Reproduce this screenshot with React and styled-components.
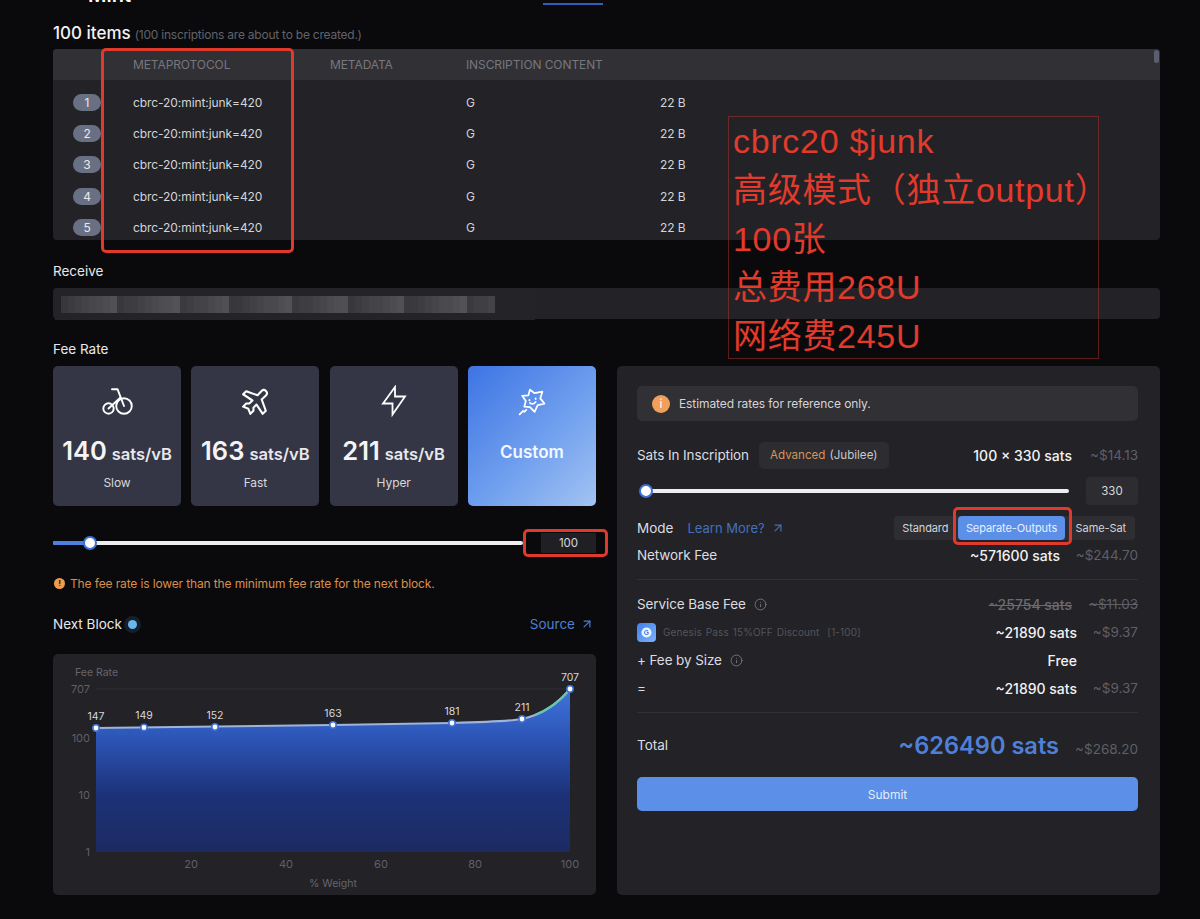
import React from "react";
import styled, { createGlobalStyle } from "styled-components";
import { ArrowLeft, ArrowUpRight, Info } from "lucide-react";
import { PiAirplaneTilt } from "react-icons/pi";

const Global = createGlobalStyle`
  html, body { margin: 0; padding: 0; background: #0a0a0c; }
  body { font-family: Inter, "Noto Sans", sans-serif; color: #e8e8ea; }
  * { box-sizing: border-box; }
`;

const Page = styled.div`
  position: relative;
  width: 1200px;
  height: 919px;
  overflow: hidden;
  background: #0a0a0c;
  padding: 0 40px 0 53px;
`;

const Header = styled.div`
  display: flex;
  align-items: center;
  height: 22px;
  margin-top: -16px;
  position: relative;
  font-size: 20px;
  font-weight: 600;
  color: #fff;
`;

const BackIcon = styled(ArrowLeft)`
  color: #c8c8cc;
  margin-right: 21px;
`;

const HeaderTab = styled.div`
  margin-left: 412px;
  width: 60px;
  height: 20px;
  border-bottom: 2px solid #2f5fb8;
`;

const TitleRow = styled.div`
  display: flex;
  align-items: baseline;
  gap: 4px;
  margin-top: 17px;
  height: 20px;
`;

const Title = styled.span`
  font-size: 17px;
  font-weight: 500;
  color: #f2f2f4;
`;

const TitleNote = styled.span`
  font-size: 12px;
  letter-spacing: -0.23px;
  color: #62626a;
`;

const TableBox = styled.div`
  position: relative;
  margin-top: 6px;
  height: 191px;
  background: #222227;
  border-radius: 4px;
  overflow: hidden;
`;

const TableHead = styled.div`
  display: grid;
  grid-template-columns: 80px 197px 136px 1fr;
  align-items: center;
  height: 31px;
  background: #303035;
  font-size: 12px;
  letter-spacing: -0.1px;
  color: #77777e;
`;

const Row = styled.div`
  display: grid;
  grid-template-columns: 20px 60px 197px 136px 194px 1fr;
  align-items: center;
  height: 31.2px;
  font-size: 12px;
  letter-spacing: -0.08px;
  color: #d4d4d8;
`;

const TableBody = styled.div`
  padding-top: 7px;
`;

const Badge = styled.span`
  grid-column: 2;
  width: 28px;
  height: 17px;
  border-radius: 9px;
  background: #6a7083;
  color: #e8e8ee;
  font-size: 12px;
  line-height: 17px;
  text-align: center;
`;

const ScrollThumb = styled.div`
  position: absolute;
  top: 1px;
  right: 1px;
  width: 5px;
  height: 13px;
  border-radius: 3px;
  background: #5a5f6e;
`;

const Section = styled.div`
  margin-top: ${(p) => p.$top}px;
  font-size: 13.5px;
  line-height: 18px;
  color: #e8e8ea;
`;

const Field = styled.div`
  position: relative;
  margin-top: 8px;
  height: 31px;
  background: #222227;
  border-radius: 4px;
`;

const BlurOverlay = styled.div`
  position: absolute;
  left: 2px;
  top: 0;
  width: 480px;
  height: 32px;
  background: #232328;
  display: flex;
  align-items: center;
  padding-left: 6px;
`;

const Pixel = styled.span`
  display: block;
  height: 17px;
  width: 7px;
`;

const Columns = styled.div`
  display: grid;
  grid-template-columns: 543px 543px;
  gap: 21px;
  margin-top: 8px;
`;

const Cards = styled.div`
  display: grid;
  grid-template-columns: repeat(4, 128px);
  gap: 10.34px;
`;

const Card = styled.div`
  height: 140px;
  border-radius: 5px;
  background: ${(p) =>
    p.$active
      ? "linear-gradient(135deg, #3d74e4 0%, #6f9fee 55%, #a3c3f3 100%)"
      : "#343645"};
  display: flex;
  flex-direction: column;
  align-items: center;
  color: #fff;
  padding-top: 20px;
`;

const IconSlot = styled.div`
  height: 30px;
  display: flex;
  align-items: center;
  justify-content: center;
`;

const Rate = styled.div`
  display: flex;
  align-items: baseline;
  gap: 5px;
  margin-top: 19px;
  height: 32px;
`;

const RateNum = styled.span`
  font-size: 25.5px;
  font-weight: 600;
  color: #f4f4f6;
`;

const RateUnit = styled.span`
  font-size: 16.5px;
  font-weight: 600;
  color: #e8e8ec;
`;

const RateName = styled.div`
  margin-top: 8px;
  font-size: 12px;
  letter-spacing: -0.1px;
  color: #d8d8dc;
`;

const CustomLabel = styled.div`
  margin-top: 26px;
  font-size: 17px;
  font-weight: 600;
  color: #f5f8ff;
`;

const SliderRow = styled.div`
  display: flex;
  align-items: center;
  margin-top: ${(p) => p.$top || 0}px;
  height: ${(p) => p.$h || 20}px;
`;

const Track = styled.div`
  position: relative;
  flex: none;
  width: ${(p) => p.$w}px;
  margin-left: ${(p) => p.$left || 0}px;
  height: 4px;
  border-radius: 2px;
  background: #eeeef0;
`;

const TrackFill = styled.div`
  position: absolute;
  left: 0;
  top: 0;
  height: 4px;
  border-radius: 2px;
  background: #4c7fe0;
`;

const Thumb = styled.div`
  position: absolute;
  top: -5px;
  width: 14px;
  height: 14px;
  margin-left: -7px;
  border-radius: 50%;
  background: #fff;
  border: 2px solid #3f70d6;
`;

const NumBox = styled.div`
  margin-left: auto;
  display: flex;
  align-items: center;
  justify-content: center;
  background: ${(p) => p.$bg};
  border-radius: ${(p) => p.$radius}px;
  width: ${(p) => p.$w}px;
  height: ${(p) => p.$h}px;
  font-size: 11.5px;
  color: #d8d8dc;
`;

const Warning = styled.div`
  display: flex;
  align-items: center;
  gap: 5px;
  margin-top: 21px;
  padding-left: 1px;
  height: 18px;
  font-size: 12px;
  letter-spacing: -0.13px;
  color: #d98e4c;
`;

const WarnDot = styled.span`
  width: 11px;
  height: 11px;
  border-radius: 50%;
  background: #ef9a4d;
  color: #1a1208;
  font-size: 8px;
  font-weight: 700;
  line-height: 11px;
  text-align: center;
`;

const NextRow = styled.div`
  display: flex;
  align-items: center;
  margin-top: 23px;
  height: 18px;
  font-size: 13.5px;
  color: #e8e8ea;
`;

const Pulse = styled.span`
  margin-left: 6px;
  width: 9px;
  height: 9px;
  border-radius: 50%;
  background: #6cb6ee;
  box-shadow: 0 0 0 4px #14202b;
`;

const SourceLink = styled.span`
  margin-left: auto;
  margin-right: 2px;
  display: flex;
  align-items: center;
  gap: 5px;
  font-size: 13.5px;
  color: #4f7ed0;
`;

const ChartCard = styled.div`
  margin-top: 21px;
  height: 241px;
  background: #222227;
  border-radius: 5px;
`;

const ChartSvg = styled.svg`
  display: block;
  font-family: Inter, sans-serif;
`;

const Panel = styled.div`
  height: 529px;
  background: #222227;
  border-radius: 5px;
  padding: 20px 22px 0 20px;
`;

const Notice = styled.div`
  display: flex;
  align-items: center;
  gap: 9px;
  height: 35px;
  padding-left: 15px;
  border-radius: 5px;
  background: #303035;
  font-size: 12px;
  letter-spacing: -0.1px;
  color: #d4d4d8;
`;

const NoticeDot = styled.span`
  width: 18px;
  height: 18px;
  border-radius: 50%;
  background: #f0a05a;
  color: #fff;
  font-size: 12px;
  line-height: 18px;
  text-align: center;
`;

const Line = styled.div`
  display: flex;
  align-items: center;
  height: ${(p) => p.$h || 28}px;
  margin-top: ${(p) => p.$top || 0}px;
`;

const Label = styled.span`
  font-size: 13.5px;
  letter-spacing: -0.1px;
  color: #dcdce0;
`;

const Mode = styled.span`
  font-size: 13.5px;
  color: #dcdce0;
  margin-right: 14px;
`;

const Amount = styled.span`
  margin-left: auto;
  font-size: 14px;
  font-weight: 500;
  color: ${(p) => (p.$struck ? "#6a6a70" : "#f2f2f4")};
  text-decoration: ${(p) => (p.$struck ? "line-through" : "none")};
`;

const Usd = styled.span`
  flex: none;
  width: ${(p) => p.$w || 61}px;
  text-align: right;
  font-size: 13.5px;
  color: #5f5f66;
  text-decoration: ${(p) => (p.$struck ? "line-through" : "none")};
`;

const Pill = styled.span`
  margin-left: 10px;
  height: 27px;
  display: inline-flex;
  align-items: center;
  padding: 0 11px;
  border-radius: 5px;
  background: #2c2c31;
  font-size: 11.6px;
  color: #c8c8cc;
`;

const PillAccent = styled.span`
  color: #d39459;
  margin-right: 4px;
`;

const LearnLink = styled.span`
  display: inline-flex;
  align-items: center;
  gap: 6px;
  font-size: 13px;
  color: #4470bc;
`;

const Segments = styled.div`
  margin-left: auto;
  margin-right: 3px;
  display: flex;
  align-items: center;
  gap: 2px;
  height: 24px;
  border-radius: 4px;
  background: #2d2d32;
`;

const Segment = styled.span`
  height: 24px;
  display: flex;
  align-items: center;
  padding: 0 ${(p) => p.$pad}px;
  border-radius: 4px;
  font-size: 11px;
  letter-spacing: -0.1px;
  color: ${(p) => (p.$active ? "#e8f0ff" : "#d4d4d8")};
  background: ${(p) => (p.$active ? "#5b8fe8" : "transparent")};
`;

const Divider = styled.div`
  height: 1px;
  background: #303036;
  margin-top: ${(p) => p.$top}px;
`;

const PassIcon = styled.span`
  width: 19px;
  height: 19px;
  border-radius: 4px;
  background: linear-gradient(135deg, #3f80ee, #7fb2f6);
  display: flex;
  align-items: center;
  justify-content: center;
`;

const PassText = styled.span`
  margin-left: 7px;
  font-size: 10px;
  letter-spacing: 0.12px;
  color: #55555c;
  word-spacing: 1px;
`;

const Hint = styled(Info)`
  margin-left: 8px;
  color: #88888e;
`;

const TotalLabel = styled.span`
  font-size: 13.5px;
  color: #dcdce0;
`;

const TotalValue = styled.span`
  margin-left: auto;
  font-size: 23.6px;
  font-weight: 600;
  color: #4f80d8;
`;

const TotalUsd = styled(Usd)`
  padding-top: 8px;
`;

const Submit = styled.div`
  margin-top: 15px;
  height: 34px;
  display: flex;
  align-items: center;
  justify-content: center;
  border-radius: 5px;
  background: #5b8fe8;
  font-size: 12px;
  color: #e4ecfb;
`;

const RedFrame = styled.div`
  position: absolute;
  left: ${(p) => p.$x}px;
  top: ${(p) => p.$y}px;
  width: ${(p) => p.$w}px;
  height: ${(p) => p.$h}px;
  border: 3px solid #e03a2c;
  border-radius: 5px;
  pointer-events: none;
`;

const Note = styled.div`
  position: absolute;
  left: 728px;
  top: 116px;
  width: 371px;
  height: 243px;
  border: 1px solid rgba(200, 50, 40, 0.45);
  padding: 0 0 0 4px;
  font-family: "Liberation Sans", "Noto Sans CJK SC", sans-serif;
  font-size: 34px;
  letter-spacing: 0.7px;
  line-height: 48.8px;
  color: #e23a2b;
  white-space: nowrap;
`;

const rows = [1, 2, 3, 4, 5];
const pixels = Array.from({ length: 62 }, (_, i) => {
  const v = 56 + ((i * 37 + (i % 5) * 23) % 28);
  return `rgb(${v},${v},${v + 3})`;
});

const BikeIcon = () => (
  <svg width="31" height="27" viewBox="0 0 31 27" fill="none" stroke="#fff" strokeWidth="1.9" strokeLinecap="round" strokeLinejoin="round">
    <circle cx="6.5" cy="20.5" r="5.2" />
    <circle cx="22" cy="18" r="7.8" />
    <path d="M10 1.2 H15.5 L22 18" />
    <path d="M6.5 20.5 L18.5 9.5" />
  </svg>
);

const BoltIcon = () => (
  <svg width="26" height="32" viewBox="0 0 26 32" fill="none" stroke="#fff" strokeWidth="1.8" strokeLinejoin="miter">
    <path d="M14 2 L2 18.5 H11.5 V29.5 L24 11.5 H14 Z" />
  </svg>
);

const StarIcon = () => (
  <svg width="31" height="31" viewBox="0 0 30 30" fill="none" stroke="#fff" strokeWidth="1.7" strokeLinejoin="round" strokeLinecap="round">
    <path d="M13.5 3.5 L18 7 L25.5 5.5 L23.5 12 L27.5 17 L21 18.5 L18 25 L13.5 20.5 L8 20 L9.5 14.5 L6 9.5 L12 9 Z" />
    <path d="M7 24 L3.5 27.5 M10 23 L8 25" />
    <path d="M13 13.5 v0.5 M19 12 v0.5 M13.5 16.5 q3 2 5.5 -1" />
  </svg>
);

const Chart = () => {
  const pts = [
    [96, 728, "147", 716],
    [144, 727.5, "149", 715],
    [215, 727, "152", 715],
    [333, 725, "163", 713],
    [452, 723, "181", 711],
    [522, 719, "211", 707],
    [570, 689, "707", 677],
  ];
  const off = (x, y) => [x - 53, y - 654];
  const p = (x, y) => off(x, y).join(" ");
  const curve = `M${p(96, 728)} L${p(333, 725)} L${p(452, 723)} C${p(490, 722)} ${p(510, 721)} ${p(522, 719)} C${p(540, 715)} ${p(556, 706)} ${p(570, 689)}`;
  const axisY = [["707", 689], ["100", 738], ["10", 795], ["1", 852]];
  const axisX = [["20", 191], ["40", 286], ["60", 381], ["80", 475], ["100", 570]];
  return (
    <ChartSvg width="543" height="241" viewBox="0 0 543 241">
      <defs>
        <linearGradient id="area" x1="0" y1="0" x2="0" y2="1">
          <stop offset="0" stopColor="#3f74dc" />
          <stop offset="0.3" stopColor="#2c55b6" />
          <stop offset="0.65" stopColor="#1c3278" />
          <stop offset="1" stopColor="#1c2a62" />
        </linearGradient>
      </defs>
      <line x1="43" x2="517" y1="35" y2="35" stroke="#2e2e33" />
      <path d={`${curve} L${p(570, 852)} L${p(96, 852)} Z`} fill="url(#area)" />
      <path d={curve} fill="none" stroke="#9fb4d8" strokeWidth="2" />
      <path d={`M${p(535, 715)} C${p(548, 710)} ${p(560, 701)} ${p(570, 689)}`} fill="none" stroke="#63c9a8" strokeWidth="2" />
      <text x="22" y="22" fontSize="10.5" fill="#66666c">Fee Rate</text>
      {axisY.map(([t, y]) => (
        <text key={t} x="37" y={y - 654 + 4} fontSize="11" fill="#606066" textAnchor="end">{t}</text>
      ))}
      {axisX.map(([t, x]) => (
        <text key={t} x={x - 53} y="214" fontSize="11" fill="#606066" textAnchor="middle">{t}</text>
      ))}
      <text x="280" y="233" fontSize="10.5" fill="#66666c" textAnchor="middle">% Weight</text>
      {pts.map(([x, y, t, ly]) => {
        const [cx, cy] = off(x, y);
        return (
          <g key={t}>
            <circle cx={cx} cy={cy} r="3.2" fill="#fff" stroke="#3f70d6" strokeWidth="1.6" />
            <text x={cx} y={ly - 654 + 4} fontSize="10.5" fill="#d8d8dc" textAnchor="middle">{t}</text>
          </g>
        );
      })}
    </ChartSvg>
  );
};

export default function App() {
  return (
    <Page>
      <Global />
      <Header>
        <BackIcon size={14} />
        Mint
        <HeaderTab />
      </Header>
      <TitleRow>
        <Title>100 items</Title>
        <TitleNote>(100 inscriptions are about to be created.)</TitleNote>
      </TitleRow>
      <TableBox>
        <TableHead>
          <span />
          <span>METAPROTOCOL</span>
          <span>METADATA</span>
          <span>INSCRIPTION CONTENT</span>
        </TableHead>
        <TableBody>
          {rows.map((n) => (
            <Row key={n}>
              <Badge>{n}</Badge>
              <span>cbrc-20:mint:junk=420</span>
              <span />
              <span>G</span>
              <span>22 B</span>
            </Row>
          ))}
        </TableBody>
        <ScrollThumb />
      </TableBox>
      <Section $top={22}>Receive</Section>
      <Field>
        <BlurOverlay>
          {pixels.map((c, i) => (
            <Pixel key={i} style={{ background: c }} />
          ))}
        </BlurOverlay>
      </Field>
      <Section $top={21}>Fee Rate</Section>
      <Columns>
        <div>
          <Cards>
            <Card>
              <IconSlot><BikeIcon /></IconSlot>
              <Rate><RateNum>140</RateNum><RateUnit>sats/vB</RateUnit></Rate>
              <RateName>Slow</RateName>
            </Card>
            <Card>
              <IconSlot><PiAirplaneTilt size={33} /></IconSlot>
              <Rate><RateNum>163</RateNum><RateUnit>sats/vB</RateUnit></Rate>
              <RateName>Fast</RateName>
            </Card>
            <Card>
              <IconSlot><BoltIcon /></IconSlot>
              <Rate><RateNum>211</RateNum><RateUnit>sats/vB</RateUnit></Rate>
              <RateName>Hyper</RateName>
            </Card>
            <Card $active>
              <IconSlot><StarIcon /></IconSlot>
              <CustomLabel>Custom</CustomLabel>
            </Card>
          </Cards>
          <SliderRow $top={27}>
            <Track $w={470}>
              <TrackFill style={{ width: 37 }} />
              <Thumb style={{ left: 37 }} />
            </Track>
            <NumBox $bg="#202024" $radius={0} $w={55} $h={20}>100</NumBox>
          </SliderRow>
          <Warning>
            <WarnDot>!</WarnDot>
            The fee rate is lower than the minimum fee rate for the next block.
          </Warning>
          <NextRow>
            Next Block
            <Pulse />
            <SourceLink>Source <ArrowUpRight size={14} /></SourceLink>
          </NextRow>
          <ChartCard><Chart /></ChartCard>
        </div>
        <Panel>
          <Notice>
            <NoticeDot>i</NoticeDot>
            Estimated rates for reference only.
          </Notice>
          <Line $top={20}>
            <Label>Sats In Inscription</Label>
            <Pill><PillAccent>Advanced</PillAccent>(Jubilee)</Pill>
            <Amount>100 × 330 sats</Amount>
            <Usd $w={66}>~$14.13</Usd>
          </Line>
          <SliderRow $top={8} $h={28}>
            <Track $w={424} $left={8}>
              <Thumb style={{ left: 1 }} />
            </Track>
            <NumBox $bg="#2c2c31" $radius={4} $w={52} $h={28}>330</NumBox>
          </SliderRow>
          <Line $top={11} $h={24}>
            <Mode>Mode</Mode>
            <LearnLink>Learn More? <ArrowUpRight size={14} /></LearnLink>
            <Segments>
              <Segment $pad={8}>Standard</Segment>
              <Segment $active $pad={7.5}>Separate-Outputs</Segment>
              <Segment $pad={9}>Same-Sat</Segment>
            </Segments>
          </Line>
          <Line $top={2} $h={26}>
            <Label>Network Fee</Label>
            <Amount>~571600 sats</Amount>
            <Usd $w={78}>~$244.70</Usd>
          </Line>
          <Divider $top={11} />
          <Line $top={10} $h={28}>
            <Label>Service Base Fee</Label>
            <Hint size={13} strokeWidth={1.4} />
            <Amount $struck>~25754 sats</Amount>
            <Usd $w={66} $struck>~$11.03</Usd>
          </Line>
          <Line $h={28}>
            <PassIcon>
              <svg width="11" height="11" viewBox="0 0 12 12" fill="none">
                <circle cx="6" cy="6" r="5.5" fill="#eaf3ff" />
                <path d="M7.8 4.4A2.3 2.3 0 1 0 7.8 7.6V6H6.4" stroke="#3f80ee" strokeWidth="1.1" />
              </svg>
            </PassIcon>
            <PassText>Genesis Pass 15%OFF Discount&nbsp; [1-100]</PassText>
            <Amount>~21890 sats</Amount>
            <Usd>~$9.37</Usd>
          </Line>
          <Line $h={28}>
            <Label>+ Fee by Size</Label>
            <Hint size={13} strokeWidth={1.4} />
            <Amount>Free</Amount>
            <Usd />
          </Line>
          <Line $h={28}>
            <Label>=</Label>
            <Amount>~21890 sats</Amount>
            <Usd>~$9.37</Usd>
          </Line>
          <Divider $top={10} />
          <Line $top={15} $h={34}>
            <TotalLabel>Total</TotalLabel>
            <TotalValue>~626490 sats</TotalValue>
            <TotalUsd $w={79}>~$268.20</TotalUsd>
          </Line>
          <Submit>Submit</Submit>
        </Panel>
      </Columns>
      <RedFrame $x={101} $y={48} $w={193} $h={205} />
      <RedFrame $x={523} $y={529} $w={85} $h={28} />
      <RedFrame $x={953} $y={507} $w={119} $h={38} />
      <Note>
        cbrc20 $junk<br />
        高级模式（独立output）<br />
        100张<br />
        总费用268U<br />
        网络费245U
      </Note>
    </Page>
  );
}
